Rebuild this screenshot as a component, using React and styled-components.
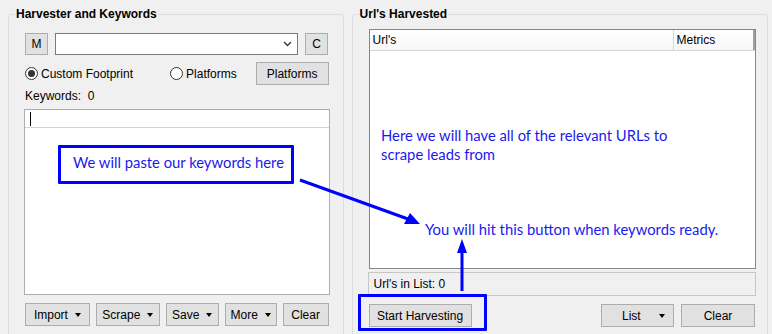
import React from "react";
import styled, { createGlobalStyle, css } from "styled-components";

const Global = createGlobalStyle`
  html, body { margin: 0; padding: 0; background: #f0f0f0; }
  body { font-family: "Liberation Sans", Arial, sans-serif; font-size: 12px; color: #000; }
`;

const Page = styled.div`
  position: relative;
  width: 772px;
  height: 334px;
  overflow: hidden;
  background: #f0f0f0;
  display: flex;
  gap: 8px;
  padding: 7px 4px 0 8px;
  box-sizing: border-box;
`;

const Group = styled.fieldset`
  margin: 0;
  box-sizing: border-box;
  width: ${(p) => p.$w}px;
  height: 360px;
  border: 1px solid #dcdcdc;
  border-radius: 3px;
  padding: ${(p) => p.$pad};
  display: flex;
  flex-direction: column;
  min-width: 0;
`;

const Legend = styled.legend`
  font-family: "Liberation Sans", Arial, sans-serif;
  font-weight: bold;
  font-size: 12px;
  line-height: 14px;
  padding: 0 1px;
  margin-left: ${(p) => p.$ml}px;
  color: #000;
`;

const Row = styled.div`
  display: flex;
  align-items: center;
  gap: ${(p) => p.$gap || 0}px;
  margin-top: ${(p) => p.$mt || 0}px;
  height: ${(p) => p.$h || "auto"};
`;

const Button = styled.button`
  box-sizing: border-box;
  height: ${(p) => p.$h || 23}px;
  width: ${(p) => p.$w}px;
  margin-left: ${(p) => p.$ml || 0}px;
  background: #e1e1e1;
  border: 1px solid #adadad;
  font-family: "Liberation Sans", Arial, sans-serif;
  font-size: 12px;
  color: #000;
  padding: ${(p) => (p.$pl ? `0 0 0 ${p.$pl}px` : 0)};
  display: flex;
  align-items: center;
  justify-content: ${(p) => (p.$pl ? "flex-start" : "center")};
  gap: ${(p) => p.$gap || 7}px;
  cursor: default;
`;

const Caret = styled.span`
  width: 0;
  height: 0;
  border-left: 3.5px solid transparent;
  border-right: 3.5px solid transparent;
  border-top: 4px solid #000;
  margin-top: 1px;
`;

const Combo = styled.div`
  box-sizing: border-box;
  width: 243px;
  height: 22px;
  background: #fff;
  border: 1px solid #7a7a7a;
  display: flex;
  align-items: center;
  justify-content: flex-end;
  padding-right: 5px;
`;

const RadioLabel = styled.label`
  display: flex;
  align-items: center;
  gap: 3px;
  margin-left: ${(p) => p.$ml || 0}px;
  font-size: 12px;
`;

const RadioCircle = styled.span`
  box-sizing: border-box;
  width: 13px;
  height: 13px;
  border-radius: 50%;
  border: 1px solid #333;
  background: #fff;
  display: flex;
  align-items: center;
  justify-content: center;
  ${(p) =>
    p.$on &&
    css`
      &::after {
        content: "";
        width: 7px;
        height: 7px;
        border-radius: 50%;
        background: #333;
      }
    `}
`;

const Label = styled.div`
  font-size: 12px;
  line-height: 14px;
  margin-top: ${(p) => p.$mt || 0}px;
  white-space: pre;
`;

const TextArea = styled.div`
  box-sizing: border-box;
  width: 306px;
  height: 186px;
  margin-top: 6px;
  margin-left: -1px;
  background: #fff;
  border: 1px solid #abadb3;
`;

const FirstLine = styled.div`
  border-bottom: 1px solid #d4d4d4;
  padding-left: 5px;
  padding-top: 2px;
  height: 15px;
`;

const Cursor = styled.div`
  width: 1px;
  height: 14px;
  background: #000;
`;

const Table = styled.div`
  box-sizing: border-box;
  width: 387px;
  height: 240px;
  border: 1px solid #828790;
  background: #fff;
  display: flex;
  flex-direction: column;
`;

const Header = styled.div`
  display: flex;
  height: 20px;
  border-bottom: 1px solid #d5d5d5;
  background: linear-gradient(#ffffff, #f7f7f7);
`;

const HeaderCell = styled.div`
  box-sizing: border-box;
  width: ${(p) => p.$w}px;
  padding-left: 3px;
  display: flex;
  align-items: center;
  font-size: 12px;
  border-right: ${(p) => (p.$last ? "2px solid #a0a0a0" : "1px solid #d5d5d5")};
`;

const Status = styled.div`
  box-sizing: border-box;
  width: 388px;
  height: 24px;
  margin-top: 3px;
  margin-left: -1px;
  border: 1px solid #c6c6c6;
  display: flex;
  align-items: center;
  padding-left: 5px;
  font-size: 12px;
`;

const Spacer = styled.div`
  flex: 1;
`;

/* Annotation overlays */
const Note = styled.div`
  position: absolute;
  left: ${(p) => p.$x}px;
  top: ${(p) => p.$y}px;
  font-family: Lato, "Open Sans", sans-serif;
  font-size: 14.8px;
  line-height: 19px;
  color: #1a1aee;
  white-space: pre;
`;

const NoteBox = styled.div`
  position: absolute;
  left: ${(p) => p.$x}px;
  top: ${(p) => p.$y}px;
  width: ${(p) => p.$w}px;
  height: ${(p) => p.$h}px;
  box-sizing: border-box;
  border: 3px solid #0000ff;
  border-radius: 1px;
`;

const Overlay = styled.svg`
  position: absolute;
  left: 0;
  top: 0;
  pointer-events: none;
`;

export default function App() {
  return (
    <>
      <Global />
      <Page>
        <Group $w={336} $pad="12px 14px 0 16px">
          <Legend $ml={-10}>Harvester and Keywords</Legend>
          <Row $gap={7}>
            <Button $w={23} $h={22}>M</Button>
            <Combo>
              <svg width="9" height="6" viewBox="0 0 9 6">
                <path d="M1 1 L4.5 4.5 L8 1" fill="none" stroke="#333" strokeWidth="1.3" />
              </svg>
            </Combo>
            <Button $w={23} $h={22}>C</Button>
          </Row>
          <Row $mt={7} $h="23px">
            <RadioLabel>
              <RadioCircle $on />
              Custom Footprint
            </RadioLabel>
            <RadioLabel $ml={37}>
              <RadioCircle />
              Platforms
            </RadioLabel>
            <Spacer />
            <Button $w={73}>Platforms</Button>
          </Row>
          <Label $mt={4}>Keywords:  0</Label>
          <TextArea>
            <FirstLine>
              <Cursor />
            </FirstLine>
          </TextArea>
          <Row $mt={8} $gap={6}>
            <Button $w={65}>Import <Caret /></Button>
            <Button $w={64}>Scrape <Caret /></Button>
            <Button $w={53}>Save <Caret /></Button>
            <Button $w={52}>More <Caret /></Button>
            <Button $w={46}>Clear</Button>
          </Row>
        </Group>

        <Group $w={417} $pad="8px 12px 0 16px">
          <Legend $ml={-10}>Url's Harvested</Legend>
          <Table>
            <Header>
              <HeaderCell $w={304}>Url's</HeaderCell>
              <HeaderCell $w={81} $last>Metrics</HeaderCell>
            </Header>
          </Table>
          <Status>Url's in List: 0</Status>
          <Row $mt={8}>
            <Button $w={103}>Start Harvesting</Button>
            <Spacer />
            <Button $w={73} $pl={20} $gap={18}>List <Caret /></Button>
            <Button $w={74} $ml={7}>Clear</Button>
          </Row>
        </Group>

        <NoteBox $x={58} $y={145} $w={236} $h={39} />
        <Note $x={73} $y={153}>We will paste our keywords here</Note>
        <Note $x={381} $y={126}>{"Here we will have all of the relevant URLs to\nscrape leads from"}</Note>
        <Note $x={425} $y={220}>You will hit this button when keywords ready.</Note>
        <NoteBox $x={358} $y={294} $w={129} $h={37} />

        <Overlay width="772" height="334" viewBox="0 0 772 334">
          <line x1="300" y1="180" x2="408" y2="219" stroke="#0000ff" strokeWidth="3" />
          <polygon points="420,224 404,224 410,213" fill="#0000ff" />
          <line x1="462" y1="291" x2="462" y2="252" stroke="#0000ff" strokeWidth="3" />
          <polygon points="462,239 457,253 467,253" fill="#0000ff" />
        </Overlay>
      </Page>
    </>
  );
}
